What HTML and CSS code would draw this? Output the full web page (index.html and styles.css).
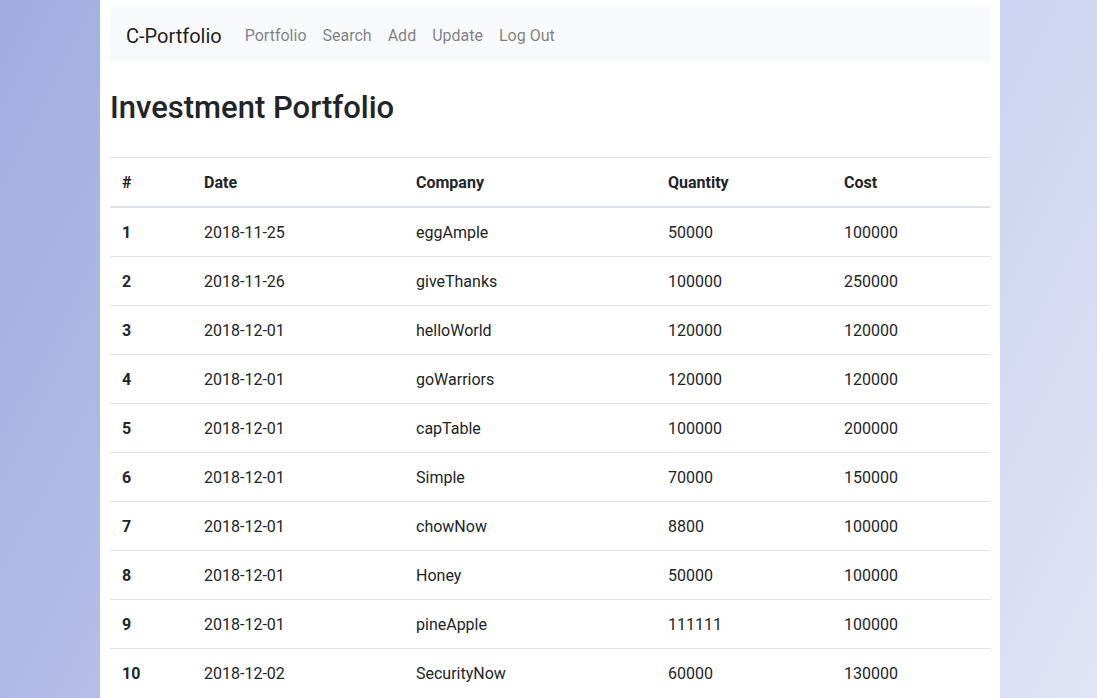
FILE: index.html
```html
<!DOCTYPE html>
<html lang="en">
<head>
<meta charset="utf-8">
<title>C-Portfolio</title>
<link rel="stylesheet" href="styles.css">
</head>
<body>
<div class="container">
  <nav class="navbar">
    <a class="brand" href="#">C-Portfolio</a>
    <ul class="nav">
      <li><a class="nav-link" href="#">Portfolio</a></li>
      <li><a class="nav-link" href="#">Search</a></li>
      <li><a class="nav-link" href="#">Add</a></li>
      <li><a class="nav-link" href="#">Update</a></li>
      <li><a class="nav-link" href="#">Log Out</a></li>
    </ul>
  </nav>
  <h2 class="title">Investment Portfolio</h2>
  <table class="table">
    <colgroup>
      <col class="c-num"><col class="c-date"><col class="c-company"><col class="c-qty"><col class="c-cost">
    </colgroup>
    <thead>
      <tr><th>#</th><th>Date</th><th>Company</th><th>Quantity</th><th>Cost</th></tr>
    </thead>
    <tbody>
      <tr><th>1</th><td>2018-11-25</td><td>eggAmple</td><td>50000</td><td>100000</td></tr>
      <tr><th>2</th><td>2018-11-26</td><td>giveThanks</td><td>100000</td><td>250000</td></tr>
      <tr><th>3</th><td>2018-12-01</td><td>helloWorld</td><td>120000</td><td>120000</td></tr>
      <tr><th>4</th><td>2018-12-01</td><td>goWarriors</td><td>120000</td><td>120000</td></tr>
      <tr><th>5</th><td>2018-12-01</td><td>capTable</td><td>100000</td><td>200000</td></tr>
      <tr><th>6</th><td>2018-12-01</td><td>Simple</td><td>70000</td><td>150000</td></tr>
      <tr><th>7</th><td>2018-12-01</td><td>chowNow</td><td>8800</td><td>100000</td></tr>
      <tr><th>8</th><td>2018-12-01</td><td>Honey</td><td>50000</td><td>100000</td></tr>
      <tr><th>9</th><td>2018-12-01</td><td>pineApple</td><td>111111</td><td>100000</td></tr>
      <tr><th>10</th><td>2018-12-02</td><td>SecurityNow</td><td>60000</td><td>130000</td></tr>
    </tbody>
  </table>
</div>
</body>
</html>
```

FILE: styles.css
```css
html {
  background: linear-gradient(117deg, #a1ade2 0%, #e0e4f6 100%) fixed;
  min-height: 100%;
}
body {
  margin: 0;
  padding-left: 3px;
  font-family: Roboto, "Liberation Sans", Arial, sans-serif;
  font-size: 16px;
  line-height: 1.5;
  color: #212529;
}
.container {
  width: 900px;
  box-sizing: border-box;
  margin: 0 auto;
  padding: 7px 10px 0;
  background: #fff;
  min-height: 698px;
}
.navbar {
  display: flex;
  align-items: center;
  background: #f8f9fa;
  height: 55px;
  padding: 2px 16px 0;
  box-sizing: border-box;
}
.brand {
  font-size: 20px;
  color: rgba(0, 0, 0, 0.9);
  text-decoration: none;
  margin-right: 15px;
}
.nav {
  display: flex;
  list-style: none;
  margin: 0;
  padding: 0;
}
.nav-link {
  display: block;
  padding: 8px;
  color: rgba(0, 0, 0, 0.5);
  text-decoration: none;
}
.title {
  font-size: 31px;
  font-weight: 500;
  line-height: 1.2;
  margin: 27px 0 31px;
}
.table {
  width: 100%;
  border-collapse: collapse;
}
.c-num { width: 82px; }
.c-date { width: 212px; }
.c-company { width: 252px; }
.c-qty { width: 176px; }
.c-cost { width: 158px; }
.table th, .table td {
  text-align: left;
  padding: 13px 12px 11px;
  border-top: 1px solid #dee2e6;
  vertical-align: top;
}
.table th { font-weight: 700; }
.table thead th {
  border-bottom: 2px solid #dee2e6;
}
```
